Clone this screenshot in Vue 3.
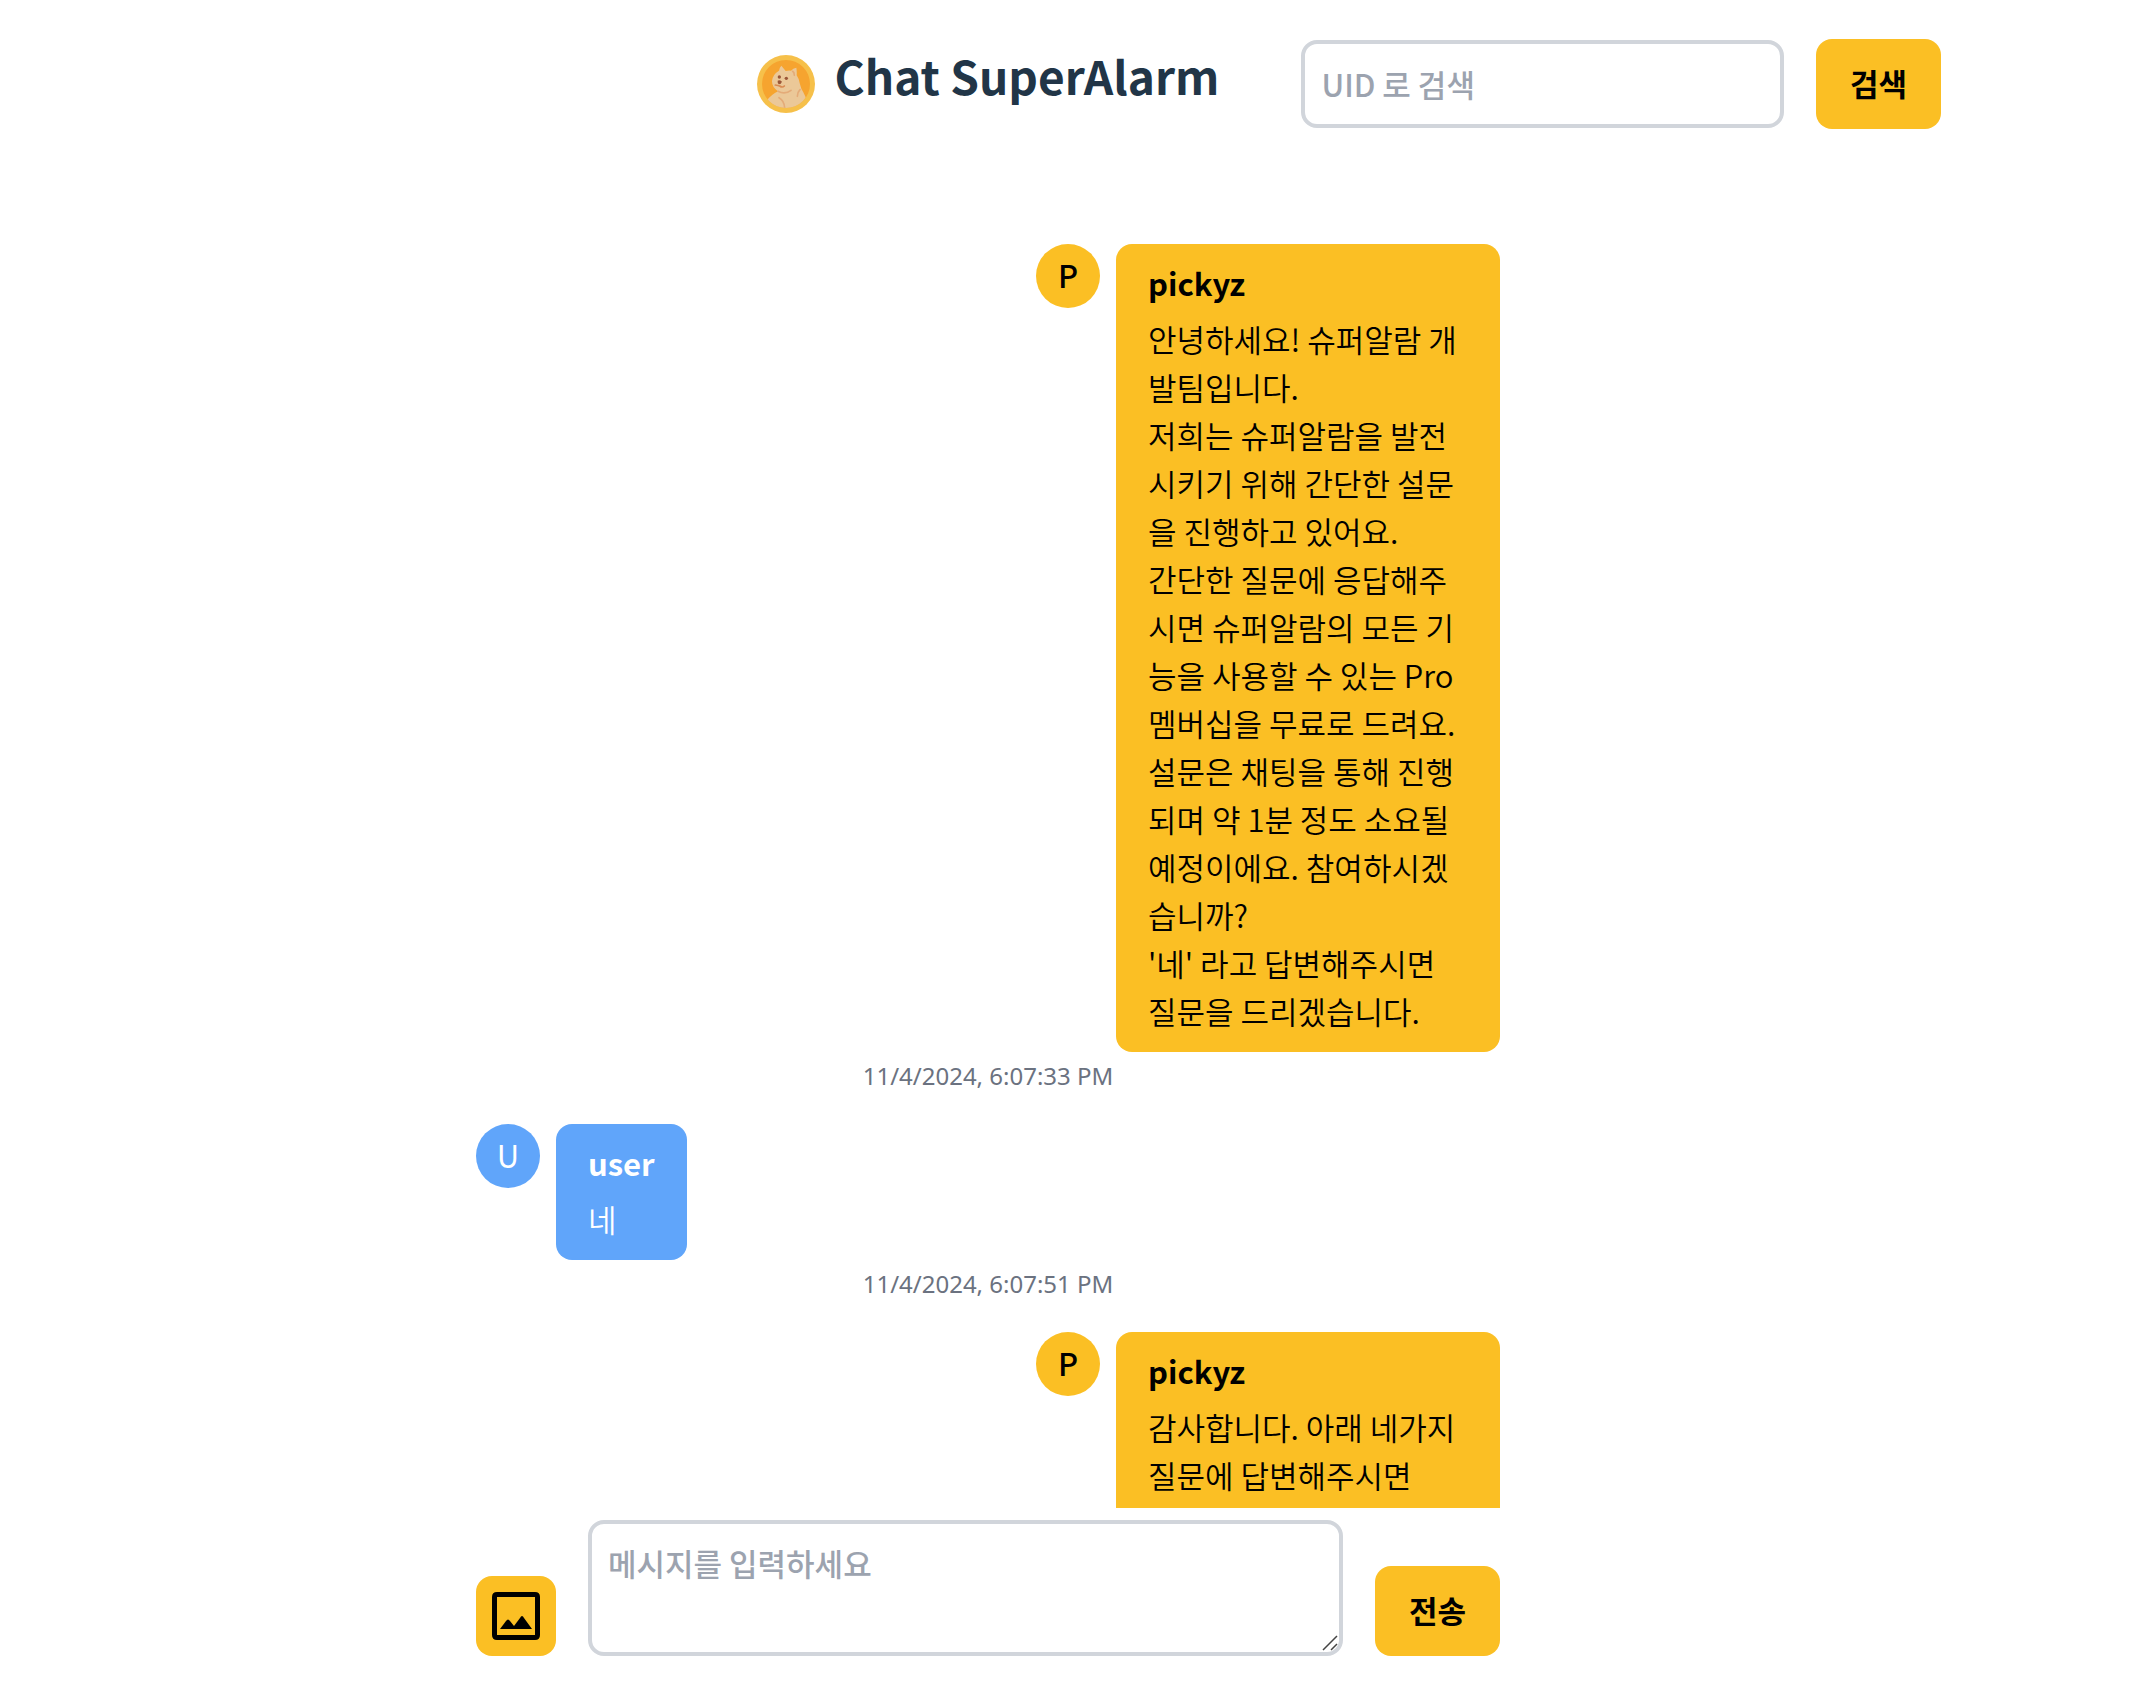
<script setup>
import { ref } from 'vue'

const uid = ref('')
const draft = ref('')

const messages = [
  {
    id: 1,
    sender: 'pickyz',
    mine: true,
    time: '11/4/2024, 6:07:33 PM',
    text: `안녕하세요! 슈퍼알람 개발팀입니다.
저희는 슈퍼알람을 발전시키기 위해 간단한 설문을 진행하고 있어요.
간단한 질문에 응답해주시면 슈퍼알람의 모든 기능을 사용할 수 있는 Pro 멤버십을 무료로 드려요.
설문은 채팅을 통해 진행되며 약 1분 정도 소요될 예정이에요. 참여하시겠습니까?
'네' 라고 답변해주시면
질문을 드리겠습니다.`,
  },
  { id: 2, sender: 'user', mine: false, time: '11/4/2024, 6:07:51 PM', text: '네' },
  {
    id: 3,
    sender: 'pickyz',
    mine: true,
    text: '감사합니다. 아래 네가지 질문에 답변해주시면\n\n',
  },
]
</script>

<template>
  <div class="page">
    <header class="header">
      <div class="brand">
        <svg class="logo" viewBox="0 0 174 174" aria-hidden="true">
          <defs>
            <clipPath id="coin"><circle cx="87" cy="87" r="72" /></clipPath>
          </defs>
          <circle cx="87" cy="87" r="87" fill="#f6c04a" />
          <circle cx="87" cy="87" r="72" fill="#f6a42f" />
          <g clip-path="url(#coin)">
            <path
              d="M66 47 Q68 36 73 32 Q80 40 86 48 Q95 46 102 47 Q108 40 118 38 Q120 50 119 61 Q127 72 129 88 Q132 102 139 112 Q148 126 150 146 L140 174 H36 L28 138 Q44 118 63 109 Q44 96 45 78 Q47 58 66 47Z"
              fill="#ebc898"
            />
            <path d="M107 49 Q112 52 112 61M63 109 Q84 120 102 106M129 104 Q121 112 121 124M66 128 Q84 138 83 164" fill="none" stroke="#e4ab78" stroke-width="5" stroke-linecap="round" />
            <path d="M55 90 Q63 91 68 93 Q76 99 82 93" fill="none" stroke="#d98a52" stroke-width="5" stroke-linecap="round" />
            <circle cx="67" cy="66" r="5" fill="#9a5638" />
            <circle cx="88" cy="70" r="5" fill="#9a5638" />
            <path d="M62 77 Q68 74 75 80 Q72 88 65 88 Q61 83 62 77Z" fill="#9a5638" />
          </g>
        </svg>
        <h1 class="title">Chat SuperAlarm</h1>
      </div>
      <form class="search" @submit.prevent>
        <input v-model="uid" class="field" type="text" aria-label="UID 로 검색" placeholder="UID 로 검색" />
        <button class="button" type="submit">검색</button>
      </form>
    </header>

    <main class="chat">
      <div class="messages">
        <article v-for="m in messages" :key="m.id" class="message">
          <div class="row" :class="{ mine: m.mine }">
            <div class="avatar">{{ m.sender[0].toUpperCase() }}</div>
            <div class="bubble">
              <p class="sender">{{ m.sender }}</p>
              <p class="text">{{ m.text }}</p>
            </div>
          </div>
          <time v-if="m.time" class="time">{{ m.time }}</time>
        </article>
      </div>

      <form class="composer" @submit.prevent>
        <button class="attach" type="button" aria-label="이미지 첨부">
          <svg viewBox="0 0 48 48" aria-hidden="true">
            <path
              fill-rule="evenodd"
              d="M5 0H43Q48 0 48 5V43Q48 48 43 48H5Q0 48 0 43V5Q0 0 5 0ZM5 5V43H43V5Z"
            />
            <path d="M8 37L14 29Q16 26 18 29L22 34L28 26Q30 22 32 26L40 37Z" />
          </svg>
        </button>
        <textarea v-model="draft" class="field message-field" rows="2" aria-label="메시지" placeholder="메시지를 입력하세요"></textarea>
        <button class="button" type="submit">전송</button>
      </form>
    </main>
  </div>
</template>

<style>
body {
  background: #fff;
}
</style>

<style scoped>
.page {
  box-sizing: border-box;
  display: flex;
  flex-direction: column;
  height: 100vh;
  padding: 39px 180px 26px 0;
  color: #000;
  font-family: 'Noto Sans CJK KR', sans-serif;
  font-size: 31px;
  line-height: 48px;
}

.header {
  display: grid;
  grid-template-columns: 1fr auto 1fr;
  column-gap: 82px;
  align-items: center;
}

.brand {
  grid-column: 2;
  display: flex;
  align-items: center;
  gap: 20px;
}

.logo {
  width: 58px;
  height: 58px;
}

.title {
  margin: 0 0 18px;
  color: #213547;
  font-size: 46px;
  font-weight: 700;
  line-height: 56px;
  white-space: nowrap;
}

.search {
  display: flex;
  align-items: center;
  gap: 32px;
  padding-right: 35px;
}

.field {
  box-sizing: border-box;
  flex: 1;
  min-width: 0;
  margin: 0;
  padding: 15px 16px 17px;
  border: 4px solid #d1d5db;
  border-radius: 16px;
  background: #fff;
  color: #000;
  font: inherit;
  font-weight: 500;
}

input.field {
  height: 88px;
}

.field::placeholder {
  color: #9ca3af;
  opacity: 1;
}

.message-field {
  display: block;
  resize: both;
  overflow: auto;
  background: #fff url("data:image/svg+xml,%3Csvg xmlns='http://www.w3.org/2000/svg' width='30' height='30'%3E%3Cpath d='M14 28L28 14M22 28L28 22' stroke='%23444' stroke-width='1.5'/%3E%3C/svg%3E") no-repeat right bottom;
}

.message-field::-webkit-resizer {
  background: transparent;
}

.button,
.attach {
  flex: none;
  margin: 0;
  border: 0;
  border-radius: 16px;
  background: #fbbf24;
  color: #000;
  cursor: pointer;
}

.button {
  padding: 20px 34px 22px;
  font: inherit;
  font-weight: 700;
}

.attach {
  display: flex;
  padding: 16px;
}

.attach svg {
  width: 48px;
  height: 48px;
}

.chat {
  display: flex;
  flex: 1;
  flex-direction: column;
  box-sizing: border-box;
  width: 100%;
  max-width: 1024px;
  min-height: 0;
  margin: 0 auto;
  padding-top: 115px;
}

.messages {
  flex: 1;
  min-height: 0;
  overflow-y: auto;
  scrollbar-width: none;
}

.message {
  margin-bottom: 32px;
}

.row {
  display: flex;
  align-items: flex-start;
  gap: 16px;
}

.row.mine {
  justify-content: flex-end;
}

.avatar {
  flex: none;
  width: 64px;
  height: 64px;
  border-radius: 50%;
  background: #60a5fa;
  color: #fff;
  line-height: 62px;
  text-align: center;
}

.bubble {
  box-sizing: border-box;
  max-width: 384px;
  padding: 15px 32px 17px;
  border-radius: 16px;
  background: #60a5fa;
  color: #fff;
}

.mine .avatar,
.mine .bubble {
  background: #fbbf24;
  color: #000;
}

.mine .avatar {
  font-weight: 500;
}

.sender,
.text {
  margin: 0;
}

.sender {
  margin-bottom: 8px;
  font-weight: 700;
}

.text {
  font-weight: 350;
  white-space: pre-wrap;
}

.time {
  display: block;
  margin-top: 8px;
  color: #6b7280;
  font-family: 'Noto Sans', sans-serif;
  font-size: 24px;
  line-height: 32px;
  text-align: center;
}

.composer {
  display: flex;
  align-items: flex-end;
  gap: 32px;
  padding-top: 12px;
}
</style>
